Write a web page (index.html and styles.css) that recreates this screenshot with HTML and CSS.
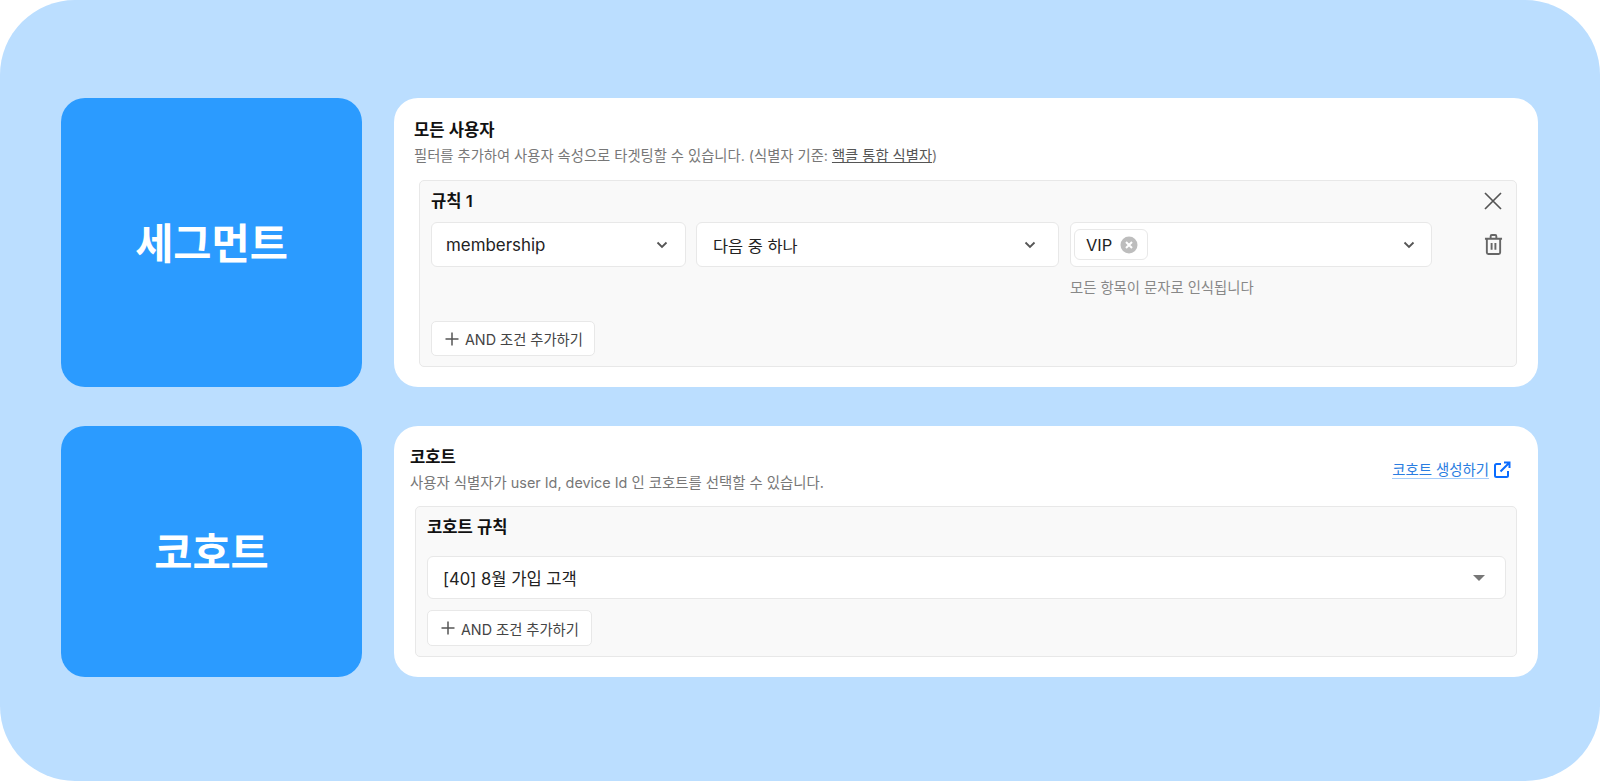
FILE: index.html
```html
<!DOCTYPE html>
<html lang="ko">
<head>
<meta charset="utf-8">
<title>세그먼트와 코호트</title>
<link rel="stylesheet" href="styles.css">
</head>
<body>
<main class="frame">
  <section class="row row-segment">
    <div class="label"><span>세그먼트</span></div>
    <div class="panel panel-segment">
      <h2 class="panel-title">모든 사용자</h2>
      <p class="panel-desc">필터를 추가하여 사용자 속성으로 타겟팅할 수 있습니다. (식별자 기준: <u>핵클 통합 식별자</u>)</p>
      <div class="rule rule-segment">
        <div class="rule-head">
          <h3 class="rule-title">규칙 1</h3>
          <svg class="icon-close" viewBox="0 0 20 20" aria-hidden="true"><path d="M2 2l16 16M18 2L2 18"/></svg>
        </div>
        <div class="fields">
          <div class="field field-a"><span>membership</span><svg class="chev" viewBox="0 0 12 8" aria-hidden="true"><path d="M1.5 1.500L6 6l4.500-4.500"/></svg></div>
          <div class="field field-b"><span>다음 중 하나</span><svg class="chev" viewBox="0 0 12 8" aria-hidden="true"><path d="M1.5 1.500L6 6l4.500-4.500"/></svg></div>
          <div class="field-wrap">
            <div class="field field-c">
              <span class="tag">VIP<svg class="tag-x" viewBox="0 0 18 18" aria-hidden="true"><circle cx="9" cy="9" r="8.5"/><path d="M6 6l6 6M12 6l-6 6"/></svg></span>
              <svg class="chev" viewBox="0 0 12 8" aria-hidden="true"><path d="M1.5 1.500L6 6l4.500-4.500"/></svg>
            </div>
            <p class="hint">모든 항목이 문자로 인식됩니다</p>
          </div>
          <svg class="icon-trash" viewBox="0 0 20 24" aria-hidden="true"><path d="M1 6h18M7 5V3.200C7 2.500 7.500 2 8.200 2h3.600c.7 0 1.200.5 1.200 1.200V5M3 6v14.500C3 21.300 3.700 22 4.500 22h11c.8 0 1.500-.7 1.500-1.500V6M8 10.500v7M12 10.500v7"/></svg>
        </div>
        <button class="add add-segment" type="button"><svg class="plus" viewBox="0 0 14 14" aria-hidden="true"><path d="M7 .5v13M.5 7h13"/></svg>AND 조건 추가하기</button>
      </div>
    </div>
  </section>
  <section class="row row-cohort">
    <div class="label"><span>코호트</span></div>
    <div class="panel panel-cohort">
      <div class="cohort-head">
        <div>
          <h2 class="panel-title">코호트</h2>
          <p class="panel-desc">사용자 식별자가 user Id, device Id 인 코호트를 선택할 수 있습니다.</p>
        </div>
        <a class="link" href="#"><span>코호트 생성하기</span><svg class="icon-ext" viewBox="0 0 18 18" aria-hidden="true"><path d="M8 3H3.500C2.700 3 2 3.700 2 4.500v10c0 .8.7 1.500 1.500 1.500h10c.8 0 1.500-.7 1.500-1.500V10M7.500 10.500L16.500 1.500M11 1.500h5.500V7"/></svg></a>
      </div>
      <div class="rule rule-cohort">
        <h3 class="rule-title">코호트 규칙</h3>
        <div class="field field-full"><span>[40] 8월 가입 고객</span><i class="caret"></i></div>
        <button class="add add-cohort" type="button"><svg class="plus" viewBox="0 0 14 14" aria-hidden="true"><path d="M7 .5v13M.5 7h13"/></svg>AND 조건 추가하기</button>
      </div>
    </div>
  </section>
</main>
</body>
</html>
```

FILE: styles.css
```css
* { box-sizing: border-box; }
html, body { margin: 0; height: 100%; background: #fff; }
body { font-family: Inter, "Noto Sans CJK KR", sans-serif; color: #111; }
h2, h3, p { margin: 0; }

.frame {
  width: 1600px;
  height: 781px;
  background: #bbdeff;
  border-radius: 75px;
  padding: 98px 62px 0 61px;
  display: flex;
  flex-direction: column;
  gap: 39px;
}
.row { display: flex; gap: 32px; }
.row-segment { height: 289px; }
.row-cohort { height: 251px; }

.label {
  width: 301px;
  flex: none;
  background: #2b9bff;
  border-radius: 24px;
  display: flex;
  align-items: center;
  justify-content: center;
  color: #fff;
  font-size: 41.5px;
  font-weight: 700;
}
.label span { margin-top: -3px; }

.panel {
  flex: 1;
  background: #fff;
  border-radius: 24px;
  display: flex;
  flex-direction: column;
}
.panel-segment { padding: 21px 20px 20px 20px; }
.panel-cohort { padding: 20px 20px 20px 16px; }

.panel-title { font-size: 16.6px; line-height: 22px; font-weight: 600; color: #111; }
.panel-desc { font-size: 14.3px; line-height: 20px; color: #777; margin-top: 5px; }
.panel-cohort .panel-desc { font-size: 14.4px; }
.panel-desc u { color: #555; }

.rule {
  background: #f9f9f9;
  border: 1px solid #e8e8e8;
  border-radius: 5px;
  margin-left: 5px;
  margin-right: 1px;
  padding: 9px 10px 10px 11px;
  display: flex;
  flex-direction: column;
  flex: 1;
}
.rule-segment { margin-top: 14px; }
.rule-cohort { margin-top: 13px; }
.rule-head { display: flex; justify-content: space-between; align-items: center; height: 22px; padding-right: 3px; }
.rule-title { font-size: 16.6px; line-height: 22px; font-weight: 600; color: #111; }
.icon-close { width: 20px; height: 20px; fill: none; stroke: #555; stroke-width: 1.7; }

.fields { display: flex; gap: 10px; margin-top: 10px; align-items: flex-start; }
.field {
  height: 45px;
  background: #fff;
  border: 1px solid #e8e8e8;
  border-radius: 6px;
  display: flex;
  align-items: center;
  justify-content: space-between;
  padding: 0 17px 0 14px;
  font-size: 16.4px;
  color: #222;
}
.field-a { width: 255px; flex: none; font-size: 16.9px; }
.field-b { width: 363px; flex: none; padding: 0 22px 0 16px; }
.field-c { padding: 0 16px 0 3px; }
.field-wrap { width: 362px; flex: none; margin-left: 1px; }
.field-full { height: 43px; margin-top: 18px; padding: 0 20px 0 15px; font-size: 16.6px; }
.chev { width: 12px; height: 8px; fill: none; stroke: #555; stroke-width: 1.8; }

.tag {
  height: 31px;
  padding: 0 9px 0 11px;
  border: 1px solid #e8e8e8;
  border-radius: 6px;
  display: inline-flex;
  align-items: center;
  gap: 8px;
}
.tag-x { width: 18px; height: 18px; }
.tag-x circle { fill: #bdbdbd; }
.tag-x path { fill: none; stroke: #fff; stroke-width: 2; }

.hint { font-size: 14.35px; line-height: 20px; color: #888; margin-top: 11px; }
.icon-trash { width: 19px; height: 23px; margin: 11px 0 0 42px; fill: none; stroke: #666; stroke-width: 2; flex: none; }

.add {
  align-self: flex-start;
  display: inline-flex;
  align-items: center;
  gap: 6px;
  background: #fff;
  border: 1px solid #e8e8e8;
  border-radius: 5px;
  font-family: inherit;
  font-size: 14.3px;
  color: #444;
  padding: 0 11px 0 13px;
}
.add-segment { height: 35px; margin-top: auto; }
.add-cohort { height: 36px; margin-top: 11px; padding-right: 12px; }
.plus { width: 14px; height: 14px; fill: none; stroke: #555; stroke-width: 1.5; }

.caret { width: 0; height: 0; border-left: 6px solid transparent; border-right: 6px solid transparent; border-top: 6px solid #777; }

.cohort-head { display: flex; justify-content: space-between; align-items: center; padding-right: 7px; }
.link { display: inline-flex; align-items: center; gap: 4px; color: #2a7de1; font-size: 14.4px; text-decoration: none; margin-top: 1px; }
.link span { border-bottom: 1px solid #a5cdfb; line-height: 17px; }
.icon-ext { width: 18px; height: 18px; fill: none; stroke: #0a6cff; stroke-width: 2; }
```
